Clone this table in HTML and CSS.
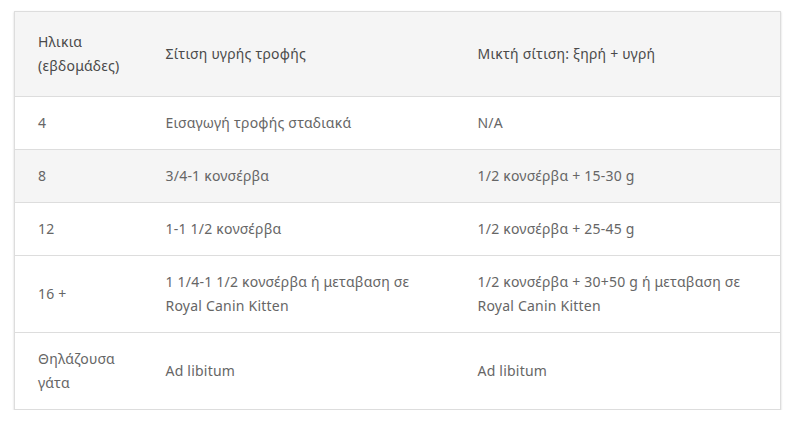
FILE: index.html
```html
<!DOCTYPE html>
<html lang="el">
<head>
<meta charset="utf-8">
<link rel="stylesheet" href="styles.css">
</head>
<body>
<div class="wrap">
<table class="feed">
<colgroup><col class="c1"><col class="c2"><col class="c3"></colgroup>
<thead>
<tr><th>Ηλικια<br>(εβδομάδες)</th><th>Σίτιση υγρής τροφής</th><th>Μικτή σίτιση: ξηρή + υγρή</th></tr>
</thead>
<tbody>
<tr><td>4</td><td>Εισαγωγή τροφής σταδιακά</td><td>N/A</td></tr>
<tr class="alt"><td>8</td><td>3/4-1 κονσέρβα</td><td>1/2 κονσέρβα + 15-30 g</td></tr>
<tr><td>12</td><td>1-1 1/2 κονσέρβα</td><td>1/2 κονσέρβα + 25-45 g</td></tr>
<tr><td>16 +</td><td>1 1/4-1 1/2 κονσέρβα ή μεταβαση σε Royal Canin Kitten</td><td>1/2 κονσέρβα + 30+50 g ή μεταβαση σε Royal Canin Kitten</td></tr>
<tr><td>Θηλάζουσα<br>γάτα</td><td>Ad libitum</td><td>Ad libitum</td></tr>
</tbody>
</table>
</div>
</body>
</html>
```
FILE: styles.css
```css
html, body { margin: 0; padding: 0; background: #fff; }
.wrap { padding: 11px 23px 0 14px; }
.feed {
  width: 767px;
  border-collapse: collapse;
  table-layout: fixed;
  font-family: "Noto Sans", sans-serif;
  font-size: 14px;
  letter-spacing: 0.22px;
  line-height: 24px;
  color: #666;
  box-shadow: 0 1px 2px rgba(0,0,0,0.18);
  border: 1px solid #ddd;
}
.c1 { width: 128px; }
.c2 { width: 312px; }
.feed th, .feed td {
  text-align: left;
  vertical-align: middle;
  padding: 14px 24px 14px 23px;
  border-top: 1px solid #ddd;
}
.feed thead tr { background: #f5f5f5; }
.feed th {
  font-weight: 400;
  color: #4a4a4a;
  padding-top: 18px;
  padding-bottom: 18px;
}
.feed tr.alt { background: #f5f5f5; }
```
